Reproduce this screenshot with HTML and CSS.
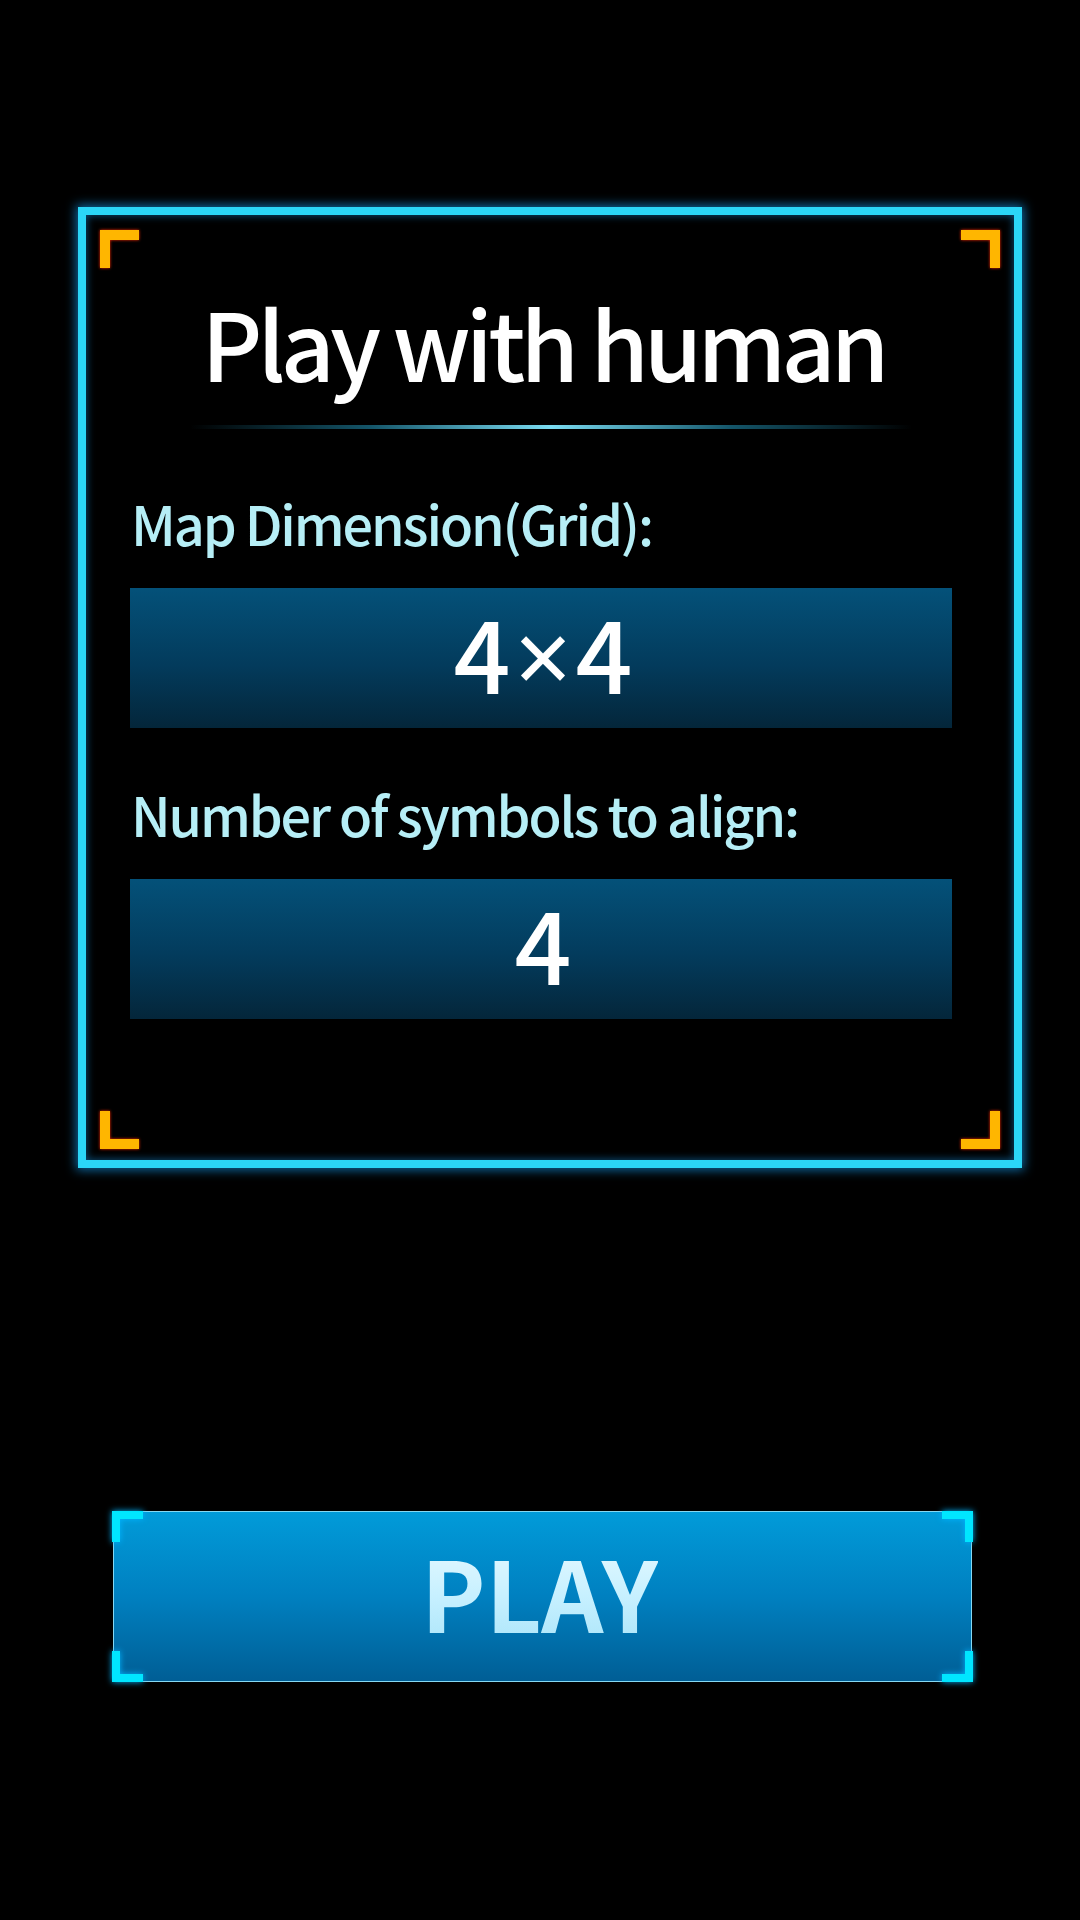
FILE: index.html
```html
<!DOCTYPE html>
<html lang="en">
<head>
<meta charset="utf-8">
<title>Play with human</title>
<link rel="stylesheet" href="styles.css">
</head>
<body>
<main class="screen">
  <section class="panel">
    <span class="corner tl"></span>
    <span class="corner tr"></span>
    <span class="corner bl"></span>
    <span class="corner br"></span>
    <h1 class="title">Play with human</h1>
    <div class="divider"></div>
    <div class="label">Map Dimension(Grid):</div>
    <div class="field">4<span class="times">×</span>4</div>
    <div class="label label-second">Number of symbols to align:</div>
    <div class="field">4</div>
  </section>
  <button class="play" type="button">
    <span class="bracket btl"></span>
    <span class="bracket btr"></span>
    <span class="bracket bbl"></span>
    <span class="bracket bbr"></span>
    <span class="play-text">PLAY</span>
  </button>
</main>
</body>
</html>
```
FILE: styles.css
```css
* { box-sizing: border-box; }
html, body {
  margin: 0;
  padding: 0;
  background: #000;
}
body {
  width: 1080px;
  height: 1920px;
  overflow: hidden;
  font-family: "Noto Sans CJK SC", "Noto Sans", sans-serif;
}
.screen {
  display: flex;
  flex-direction: column;
  padding-top: 207px;
}
.panel {
  position: relative;
  margin-left: 78px;
  width: 944px;
  height: 961px;
  border: 8px solid #2bd6f7;
  box-shadow: 0 0 10px 2px rgba(20, 150, 230, 0.7), inset 0 0 8px rgba(20, 150, 230, 0.6);
  padding: 70px 62px 0 44px;
  display: flex;
  flex-direction: column;
}
.corner {
  position: absolute;
  width: 39px;
  height: 38px;
  border: 0 solid #ffb600;
  filter: drop-shadow(0 0 1.5px #ff2a00);
}
.corner.tl { left: 14px; top: 15px; border-top-width: 10px; border-left-width: 10px; }
.corner.tr { right: 14px; top: 15px; border-top-width: 10px; border-right-width: 10px; }
.corner.bl { left: 14px; bottom: 11px; border-bottom-width: 10px; border-left-width: 10px; }
.corner.br { right: 14px; bottom: 11px; border-bottom-width: 10px; border-right-width: 10px; }
.title {
  margin: 0;
  font-size: 94px;
  line-height: 112px;
  font-weight: 500;
  letter-spacing: -4.8px;
  color: #ffffff;
  text-align: center;
  padding-left: 4px;
}
.divider {
  align-self: center;
  margin-top: 28px;
  margin-left: 20px;
  width: 722px;
  height: 4px;
  background: linear-gradient(90deg, rgba(40, 170, 210, 0) 0%, rgba(40, 170, 210, 0.5) 25%, #7adcf2 50%, rgba(40, 170, 210, 0.5) 75%, rgba(40, 170, 210, 0) 100%);
  filter: blur(0.6px);
}
.label {
  margin-top: 62px;
  font-size: 54px;
  line-height: 64px;
  font-weight: 500;
  letter-spacing: -2.1px;
  color: #b6eef6;
  padding-left: 1px;
}
.label-second { margin-top: 54px; }
.field {
  margin-top: 33px;
  height: 140px;
  background: linear-gradient(180deg, #045179 0%, #033b5c 55%, #04263a 100%);
  color: #ffffff;
  font-size: 100px;
  line-height: 126px;
  font-weight: 500;
  padding-bottom: 14px;
  text-align: center;
  padding-left: 4px;
}
.times {
  font-family: "Noto Sans", "DejaVu Sans", sans-serif;
  font-weight: 400;
  padding: 0 4px;
}
.play {
  position: relative;
  margin: 343px 0 0 113px;
  width: 859px;
  height: 171px;
  padding: 0 6px 14px 0;
  border: 1px solid #86d8f2;
  background: linear-gradient(180deg, #019bd9 0%, #0080c0 50%, #005e95 100%);
  font-family: "Noto Sans CJK SC", "Noto Sans", sans-serif;
  font-size: 97px;
  font-weight: 700;
  line-height: 157px;
  text-align: center;
  cursor: pointer;
}
.play-text {
  background: linear-gradient(180deg, #f0fcff 0%, #c6f0ff 55%, #a4e2f8 100%);
  -webkit-background-clip: text;
  background-clip: text;
  color: transparent;
}
.bracket {
  position: absolute;
  width: 31px;
  height: 31px;
  border: 0 solid #00e6ff;
  filter: drop-shadow(0 0 3px #00b4ff);
}
.bracket.btl { left: -2px; top: -1px; border-top-width: 8px; border-left-width: 8px; }
.bracket.btr { right: -2px; top: -1px; border-top-width: 8px; border-right-width: 8px; }
.bracket.bbl { left: -2px; bottom: -1px; border-bottom-width: 8px; border-left-width: 8px; }
.bracket.bbr { right: -2px; bottom: -1px; border-bottom-width: 8px; border-right-width: 8px; }
```
